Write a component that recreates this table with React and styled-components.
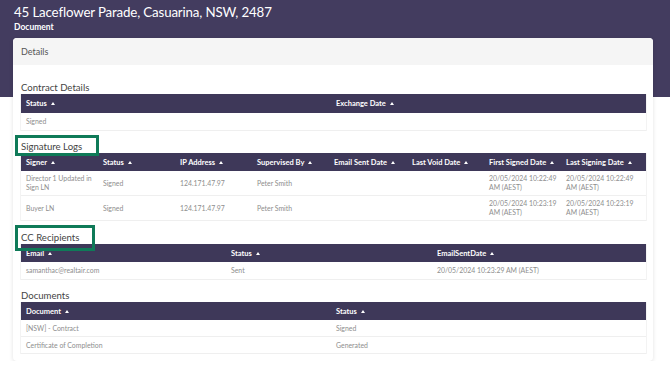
import React from "react";
import styled, { createGlobalStyle } from "styled-components";

const Global = createGlobalStyle`
  html, body { margin: 0; padding: 0; background: #fff; }
  body { font-family: "Lato", "Noto Sans", sans-serif; -webkit-font-smoothing: antialiased; }
  * { box-sizing: border-box; }
`;

const Hero = styled.header`
  height: 97px;
  background: #433c5f;
  padding: 5px 14px 0;
  color: #fff;
`;

const Title = styled.h1`
  margin: 0;
  font-size: 13.3px;
  line-height: 15px;
  font-weight: 400;
  letter-spacing: -0.15px;
`;

const Subtitle = styled.div`
  margin-top: 2px;
  font-size: 8.5px;
  line-height: 10px;
  font-weight: 700;
`;

const Card = styled.section`
  margin: -59px 17px 0 13px;
  background: #fff;
  border-radius: 4px;
  box-shadow: 0 1px 4px rgba(0, 0, 0, 0.12);
  padding-bottom: 7px;
`;

const CardHeader = styled.div`
  height: 27px;
  background: #f5f5f5;
  border-radius: 4px 4px 0 0;
  display: flex;
  align-items: center;
  padding-left: 8px;
  font-size: 9px;
  color: #555;
`;

const CardBody = styled.div`
  padding: 0 6px 0 7px;
`;

const Section = styled.div`
  margin-top: ${(p) => p.$top}px;
`;

const SectionTitle = styled.div`
  position: relative;
  font-size: 9.6px;
  line-height: 12px;
  color: #444;
  padding-left: 1px;
`;

const Highlight = styled.span`
  position: absolute;
  left: ${(p) => p.$left}px;
  top: ${(p) => p.$top}px;
  width: ${(p) => p.$w}px;
  height: ${(p) => p.$h}px;
  border: 3px solid #0f7a58;
  pointer-events: none;
  z-index: 2;
`;

const Table = styled.div`
  display: grid;
  grid-template-columns: ${(p) => p.$cols};
  border-left: 1px solid #f3f3f3;
  border-right: 1px solid #f3f3f3;
`;

const HeadCell = styled.div`
  background: #3e3859;
  color: #fff;
  font-size: 7.5px;
  font-weight: 700;
  height: ${(p) => p.$h || 19}px;
  display: flex;
  align-items: center;
  gap: 4px;
  padding: 0 5px;
  white-space: nowrap;
`;

const Caret = styled.span`
  display: inline-block;
  width: 0;
  height: 0;
  border-left: 2.5px solid transparent;
  border-right: 2.5px solid transparent;
  border-bottom: 3px solid #fff;
`;

const Cell = styled.div`
  min-height: ${(p) => p.$h || 18}px;
  display: flex;
  align-items: center;
  padding: 3px 1px 3px 5px;
  font-size: 6.9px;
  line-height: 9px;
  color: #8e8e8e;
  border-bottom: 1px solid #efefef;
`;

const CellText = styled.span`
  max-width: ${(p) => (p.$max ? p.$max + "px" : "none")};
`;

function Grid({ cols, heads, rows, rowH, headH, textMax }) {
  return (
    <Table $cols={cols}>
      {heads.map((h) => (
        <HeadCell key={h} $h={headH}>
          {h}
          <Caret />
        </HeadCell>
      ))}
      {rows.map((r, i) =>
        r.map((c, j) => (
          <Cell key={i + "-" + j} $h={rowH}>
            <CellText $max={textMax}>{c}</CellText>
          </Cell>
        ))
      )}
    </Table>
  );
}

export default function App() {
  return (
    <>
      <Global />
      <Hero>
        <Title>45 Laceflower Parade, Casuarina, NSW, 2487</Title>
        <Subtitle>Document</Subtitle>
      </Hero>
      <Card>
        <CardHeader>Details</CardHeader>
        <CardBody>
          <Section $top={17}>
            <SectionTitle>Contract Details</SectionTitle>
            <Grid
              cols="310px 1fr"
              heads={["Status", "Exchange Date"]}
              rows={[["Signed", ""]]}
            />
          </Section>
          <Section $top={10}>
            <SectionTitle>
              Signature Logs
              <Highlight $left={-5} $top={-6} $w={84} $h={21} />
            </SectionTitle>
            <Grid
              cols="77px 77px 77px 77px 78px 77px 77px 1fr"
              headH={18}
              rowH={25}
              textMax={68}
              heads={[
                "Signer",
                "Status",
                "IP Address",
                "Supervised By",
                "Email Sent Date",
                "Last Void Date",
                "First Signed Date",
                "Last Signing Date",
              ]}
              rows={[
                [
                  "Director 1 Updated in Sign LN",
                  "Signed",
                  "124.171.47.97",
                  "Peter Smith",
                  "",
                  "",
                  "20/05/2024 10:22:49 AM (AEST)",
                  "20/05/2024 10:22:49 AM (AEST)",
                ],
                [
                  "Buyer LN",
                  "Signed",
                  "124.171.47.97",
                  "Peter Smith",
                  "",
                  "",
                  "20/05/2024 10:23:19 AM (AEST)",
                  "20/05/2024 10:23:19 AM (AEST)",
                ],
              ]}
            />
          </Section>
          <Section $top={11}>
            <SectionTitle>
              CC Recipients
              <Highlight $left={-5} $top={-7} $w={80} $h={26} />
            </SectionTitle>
            <Grid
              cols="205px 206px 1fr"
              headH={18}
              heads={["Email", "Status", "EmailSentDate"]}
              rows={[["samanthac@realtair.com", "Sent", "20/05/2024 10:23:29 AM (AEST)"]]}
            />
          </Section>
          <Section $top={10}>
            <SectionTitle>Documents</SectionTitle>
            <Grid
              cols="310px 1fr"
              headH={18}
              rowH={17}
              heads={["Document", "Status"]}
              rows={[
                ["[NSW] - Contract", "Signed"],
                ["Certificate of Completion", "Generated"],
              ]}
            />
          </Section>
        </CardBody>
      </Card>
    </>
  );
}
